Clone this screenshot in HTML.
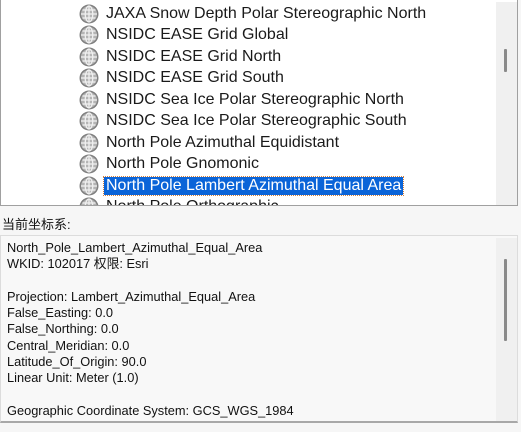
<!DOCTYPE html>
<html><head><meta charset="utf-8"><style>
*{margin:0;padding:0;box-sizing:border-box}
body{width:521px;height:432px;background:#f6f6f6;position:relative;overflow:hidden;font-family:"Liberation Sans","Noto Sans CJK SC",sans-serif}
#top{position:absolute;left:0;top:-2px;width:518px;height:208px;background:#fff;border:1px solid #a0a0a0;overflow:hidden}
.sb{position:absolute;background:#f0f0f0}
.th{position:absolute;width:3px;background:#8a8a8a;border-radius:1px}
.row{position:absolute;left:78px;height:21px;font-size:16px;color:#1a1a1a;white-space:nowrap;display:flex;align-items:center}
.row svg{width:20px;height:20px;margin-right:5px}
.row span{padding:0 2px;line-height:18px}
.sel span{background:#0a64d8;color:#fff;outline:1px dotted #d08040}
#lbl{position:absolute;left:2px;top:214px;font-size:13px;color:#111}
#bot{position:absolute;left:0;top:235px;width:518px;height:188px;background:#f8f8f8;border:1px solid #dcdcdc;border-bottom:2px solid #a8a8a8;overflow:hidden}
#txt{position:absolute;left:6px;top:4px;font-size:12.8px;line-height:16.3px;color:#111;white-space:pre}
</style></head><body>
<svg width="0" height="0" style="position:absolute"><defs><symbol id="g" viewBox="0 0 20 20"><circle cx="10" cy="10" r="9.5" fill="#808080"/><circle cx="10" cy="10" r="8" fill="#b4b4b4"/><g stroke="#f0f0f0" stroke-width="1.3" fill="none"><ellipse cx="10" cy="10" rx="3.8" ry="8"/><line x1="10" y1="2" x2="10" y2="18"/><line x1="2" y1="10" x2="18" y2="10"/><line x1="3.5" y1="6" x2="16.5" y2="6"/><line x1="3.5" y1="14" x2="16.5" y2="14"/></g></symbol></defs></svg>
<div id="top">
<div class="row" style="top:4px"><svg><use href="#g"/></svg><span>JAXA Snow Depth Polar Stereographic North</span></div>
<div class="row" style="top:25.5px"><svg><use href="#g"/></svg><span>NSIDC EASE Grid Global</span></div>
<div class="row" style="top:47px"><svg><use href="#g"/></svg><span>NSIDC EASE Grid North</span></div>
<div class="row" style="top:68.5px"><svg><use href="#g"/></svg><span>NSIDC EASE Grid South</span></div>
<div class="row" style="top:90px"><svg><use href="#g"/></svg><span>NSIDC Sea Ice Polar Stereographic North</span></div>
<div class="row" style="top:111.5px"><svg><use href="#g"/></svg><span>NSIDC Sea Ice Polar Stereographic South</span></div>
<div class="row" style="top:133px"><svg><use href="#g"/></svg><span>North Pole Azimuthal Equidistant</span></div>
<div class="row" style="top:154.5px"><svg><use href="#g"/></svg><span>North Pole Gnomonic</span></div>
<div class="row sel" style="top:176px"><svg><use href="#g"/></svg><span>North Pole Lambert Azimuthal Equal Area</span></div>
<div class="row" style="top:197.5px"><svg><use href="#g"/></svg><span>North Pole Orthographic</span></div>
<div class="sb" style="left:495px;top:3px;width:21px;height:203px"></div>
<div class="th" style="left:503px;top:50px;height:23px"></div>
</div>
<div id="lbl">当前坐标系:</div>
<div id="bot">
<div id="txt">North_Pole_Lambert_Azimuthal_Equal_Area
WKID: 102017 权限: Esri

Projection: Lambert_Azimuthal_Equal_Area
False_Easting: 0.0
False_Northing: 0.0
Central_Meridian: 0.0
Latitude_Of_Origin: 90.0
Linear Unit: Meter (1.0)

Geographic Coordinate System: GCS_WGS_1984</div>
<div class="sb" style="left:495px;top:2px;width:21px;height:184px"></div>
<div class="th" style="left:503px;top:23px;height:82px"></div>
</div>
</body></html>
